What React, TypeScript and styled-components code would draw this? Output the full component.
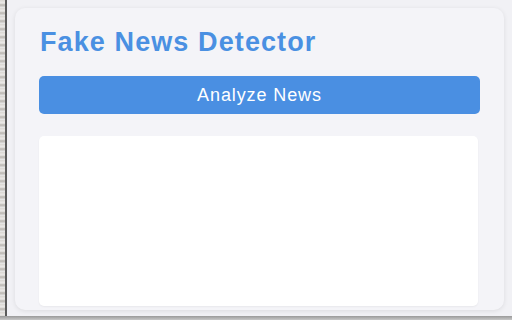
import styled, { createGlobalStyle } from "styled-components";

const GlobalStyle = createGlobalStyle`
  html, body {
    margin: 0;
    padding: 0;
    width: 512px;
    height: 320px;
    overflow: hidden;
    background: #f1f1f5;
  }
`;

const Screen = styled.div`
  width: 512px;
  height: 320px;
  display: flex;
  flex-direction: column;
  font-family: "Liberation Sans", Arial, sans-serif;
`;

const Body = styled.div`
  flex: 1;
  display: flex;
  min-height: 0;
`;

const PageBehind = styled.div`
  width: 5px;
  background: repeating-linear-gradient(
    180deg,
    #d9d6d2 0px,
    #eceae8 3px,
    #b9b5b0 5px,
    #eeeeee 8px
  );
`;

const WindowEdge = styled.div`
  width: 2px;
  background: #5a5a5a;
`;

const Popup = styled.div`
  flex: 1;
  background: #f1f1f5;
  padding: 8px 8px 6px 8px;
  display: flex;
  min-height: 0;
`;

const Card = styled.div`
  flex: 1;
  background: #f4f4f8;
  border-radius: 10px;
  box-shadow: 0 1px 5px rgba(0, 0, 0, 0.09);
  padding: 16px 24px 4px 24px;
  display: flex;
  flex-direction: column;
  overflow: hidden;
`;

const Title = styled.h1`
  margin: 0 0 16px 1px;
  font-size: 27px;
  line-height: 36px;
  font-weight: 700;
  letter-spacing: 1.1px;
  color: #4a90e2;
`;

const AnalyzeButton = styled.button`
  height: 38px;
  border: none;
  border-radius: 5px;
  background: #4a8fe2;
  color: #fff;
  font-family: inherit;
  font-size: 18px;
  letter-spacing: 0.9px;
  cursor: pointer;
`;

const ResultBox = styled.div`
  margin-top: 22px;
  margin-right: 2px;
  flex: 1;
  background: #fff;
  border-radius: 5px;
  box-shadow: 0 1px 2px rgba(0, 0, 0, 0.05);
`;

const BottomEdge = styled.div`
  height: 4px;
  background: linear-gradient(180deg, #9a9a9a, #c8c8c8);
`;

export default function App() {
  return (
    <>
      <GlobalStyle />
      <Screen>
        <Body>
          <PageBehind />
          <WindowEdge />
          <Popup>
            <Card>
              <Title>Fake News Detector</Title>
              <AnalyzeButton>Analyze News</AnalyzeButton>
              <ResultBox />
            </Card>
          </Popup>
        </Body>
        <BottomEdge />
      </Screen>
    </>
  );
}
